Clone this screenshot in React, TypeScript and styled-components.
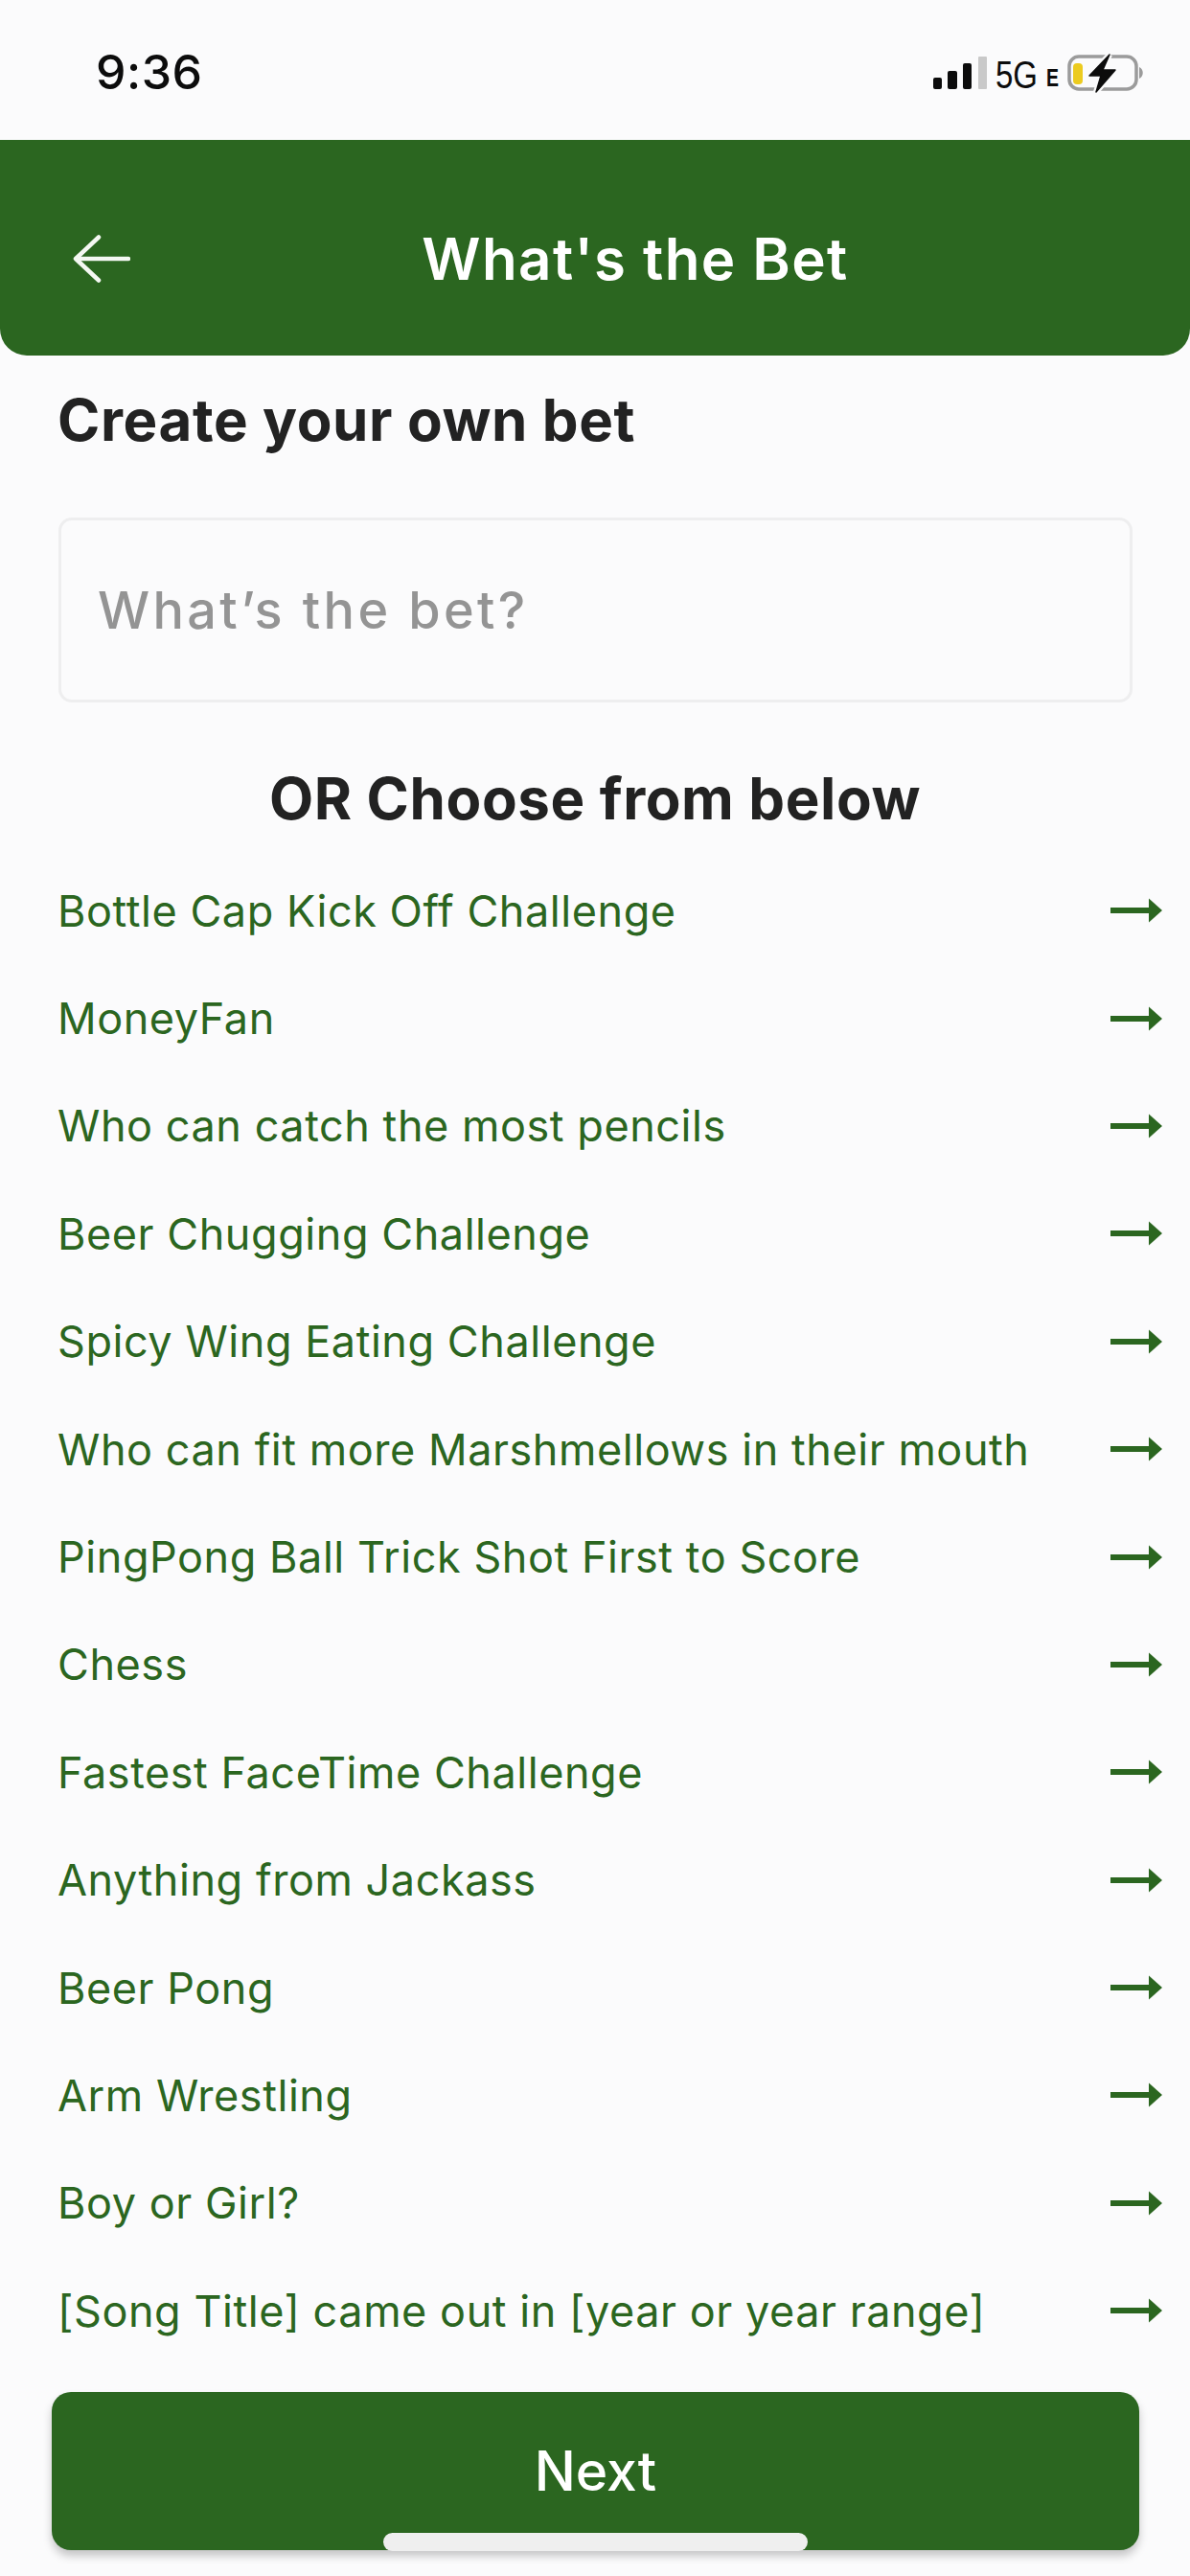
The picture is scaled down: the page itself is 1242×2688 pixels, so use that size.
import { createGlobalStyle } from 'styled-components';
import styled from 'styled-components';

const GREEN = '#2b6620';

const bets = [
  'Bottle Cap Kick Off Challenge',
  'MoneyFan',
  'Who can catch the most pencils',
  'Beer Chugging Challenge',
  'Spicy Wing Eating Challenge',
  'Who can fit more Marshmellows in their mouth',
  'PingPong Ball Trick Shot First to Score',
  'Chess',
  'Fastest FaceTime Challenge',
  'Anything from Jackass',
  'Beer Pong',
  'Arm Wrestling',
  'Boy or Girl?',
  '[Song Title] came out in [year or year range]',
];

const Global = createGlobalStyle`
  html, body {
    margin: 0;
    padding: 0;
    background: #fbfbfc;
  }
  * {
    box-sizing: border-box;
  }
`;

const Screen = styled.div`
  position: relative;
  width: 1242px;
  height: 2688px;
  overflow: hidden;
  background: #fbfbfc;
  font-family: Inter, "Liberation Sans", sans-serif;
`;

const StatusBar = styled.div`
  height: 146px;
  display: flex;
  align-items: center;
  justify-content: space-between;
  padding: 4px 44px 0 100px;
`;

const Clock = styled.div`
  font-size: 50px;
  font-weight: 500;
  color: #0c0c0c;
  letter-spacing: 0.5px;
`;

const StatusIcons = styled.div`
  display: flex;
  align-items: center;
`;

const Header = styled.header`
  height: 225px;
  padding-top: 23px;
  background: ${GREEN};
  border-radius: 0 0 28px 28px;
  display: flex;
  align-items: center;
  justify-content: center;
  position: relative;
`;

const BackButton = styled.div`
  position: absolute;
  left: 76px;
  top: 99px;
  width: 60px;
  height: 50px;
  display: flex;
`;

const HeaderTitle = styled.h1`
  margin: 0 0 0 84px;
  font-size: 60px;
  font-weight: 600;
  color: #fff;
  letter-spacing: 1.4px;
`;

const Content = styled.main`
  padding: 0 60px;
`;

const SectionHeading = styled.h2`
  margin: 34px 0 0;
  height: 66px;
  line-height: 66px;
  font-size: 60px;
  font-weight: 700;
  color: #222;
  letter-spacing: 0.6px;
`;

const BetInput = styled.div`
  margin-top: 69px;
  margin-left: 1px;
  width: 1121px;
  height: 193px;
  border: 3px solid #eeeeef;
  border-radius: 14px;
  display: flex;
  align-items: center;
  padding-left: 38px;
  font-size: 54px;
  font-weight: 500;
  letter-spacing: 3.35px;
  color: #949494;
`;

const OrHeading = styled.h2`
  margin: 67px 0 0;
  height: 66px;
  line-height: 66px;
  text-align: center;
  font-size: 60px;
  font-weight: 700;
  color: #222;
  letter-spacing: 0.6px;
`;

const BetList = styled.ul`
  list-style: none;
  margin: 28px -31px 0 0;
  padding: 0;
`;

const BetRow = styled.li`
  height: 112.4px;
  display: flex;
  align-items: center;
  justify-content: space-between;
  font-size: 45px;
  color: ${GREEN};
  letter-spacing: 0.55px;
`;

const NextButton = styled.button`
  position: absolute;
  left: 54px;
  top: 2496px;
  width: 1135px;
  height: 165px;
  border: 0;
  border-radius: 20px;
  background: ${GREEN};
  color: #fff;
  font-family: inherit;
  font-size: 57px;
  font-weight: 500;
  box-shadow: 0 6px 10px rgba(0, 0, 0, 0.22);
`;

const HomeBar = styled.div`
  position: absolute;
  left: 400px;
  top: 2643px;
  width: 443px;
  height: 19px;
  border-radius: 10px;
  background: #efefef;
`;

function RowArrow() {
  return (
    <svg width="54" height="26" viewBox="0 0 54 26">
      <path d="M0 13H42" stroke={GREEN} strokeWidth="6" />
      <path d="M40 0.5L54 13L40 25.5Z" fill={GREEN} />
    </svg>
  );
}

function StatusGlyphs() {
  return (
    <svg width="224" height="50" viewBox="0 0 224 50">
      <rect x="0" y="31" width="9" height="12" rx="2" fill="#0c0c0c" />
      <rect x="15" y="24" width="10" height="19" rx="2" fill="#0c0c0c" />
      <rect x="31" y="16" width="9" height="27" rx="2" fill="#0c0c0c" />
      <rect x="47" y="9" width="9" height="34" rx="1" fill="#c9c9c9" />
      <text x="65" y="42" fontFamily="'Liberation Sans', sans-serif" fontSize="40" fill="#0c0c0c" textLength="44" lengthAdjust="spacingAndGlyphs">5G</text>
      <text x="118" y="40" fontFamily="'Liberation Sans', sans-serif" fontSize="25" fontWeight="700" fill="#0c0c0c" textLength="13" lengthAdjust="spacingAndGlyphs">E</text>
      <rect x="142" y="9" width="70" height="34" rx="10" fill="none" stroke="#9b9b9b" strokeWidth="3.5" />
      <rect x="146" y="16" width="10" height="22" rx="4" fill="#eccb1f" />
      <path d="M215 20c5 2 5 10 0 12z" fill="#9b9b9b" />
      <path d="M184 7L163 29H175L170 46L190 23H177Z" fill="none" stroke="#fbfbfc" strokeWidth="6" />
      <path d="M184 7L163 29H175L170 46L190 23H177Z" fill="#0c0c0c" stroke="#0c0c0c" strokeWidth="1.5" strokeLinejoin="round" />
    </svg>
  );
}

export default function App() {
  return (
    <Screen>
      <Global />
      <StatusBar>
        <Clock>9:36</Clock>
        <StatusIcons>
          <StatusGlyphs />
        </StatusIcons>
      </StatusBar>
      <Header>
        <BackButton>
          <svg width="60" height="50" viewBox="0 0 60 50" fill="none" stroke="#f4f8f2" strokeWidth="4.5" strokeLinecap="round" strokeLinejoin="round">
            <path d="M58 25H4" />
            <path d="M27 2.5L3 25L27 47.5" />
          </svg>
        </BackButton>
        <HeaderTitle>What's the Bet</HeaderTitle>
      </Header>
      <Content>
        <SectionHeading>Create your own bet</SectionHeading>
        <BetInput>What’s the bet?</BetInput>
        <OrHeading>OR Choose from below</OrHeading>
        <BetList>
          {bets.map((bet) => (
            <BetRow key={bet}>
              {bet}
              <RowArrow />
            </BetRow>
          ))}
        </BetList>
      </Content>
      <NextButton>Next</NextButton>
      <HomeBar />
    </Screen>
  );
}
